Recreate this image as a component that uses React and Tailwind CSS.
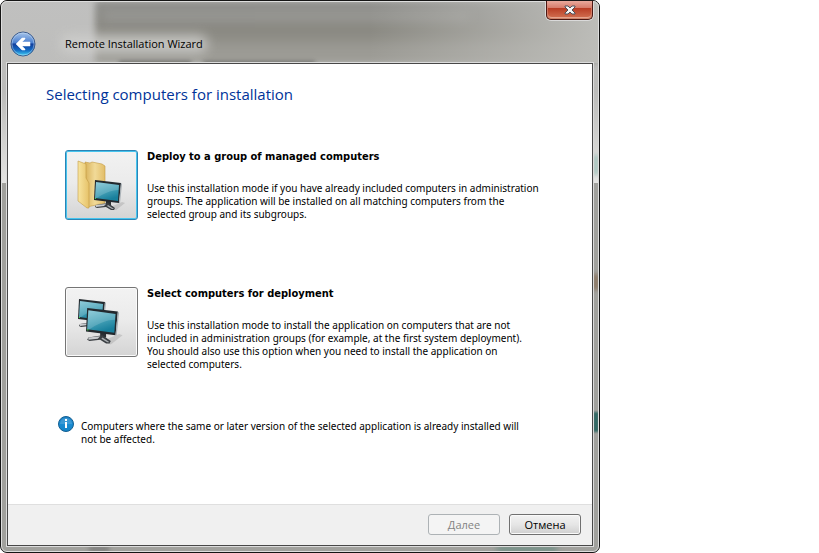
import React from "react";

function Monitor({ id }) {
  return (
    <g>
      <path d="M14 28 L28 22 L31 23 L21 31 Z" fill="#8a8a8a" opacity="0.3" />
      <path d="M12 20 L17 21 L17 25 L12 25 Z" fill="#2b2f33" />
      <path d="M2 25 L14 23 L21 28 L20 30 L17 30 L12 27 L3 28 L1 27 Z" fill="#3a3e42" />
      <path d="M2 25 L12 24 L10 26 L2 27 Z" fill="#c9cccf" />
      <path d="M14 25 L20 29 L18 29 L13 26 Z" fill="#a9adb0" />
      <path d="M1 0 L27 3 L25 23 L0 20 Z" fill="#23292e" />
      <path d="M27 3 L28 4 L26 23 L25 23 Z" fill="#a8b0b5" />
      <path d="M2 2 L25 5 L24 21 L1 18 Z" fill={`url(#${id})`} />
      <path d="M2 2 L25 5 L24.500 10 C17 10 9 14 3 18 L1 18 Z" fill="#ffffff" opacity="0.16" />
      <rect x="1" y="18" width="1" height="1" fill="#3fdc3f" />
    </g>
  );
}

function ScreenGradient({ id }) {
  return (
    <linearGradient id={id} x1="0" y1="0" x2="0.4" y2="1">
      <stop offset="0" stopColor="#7cc3d3" />
      <stop offset="0.5" stopColor="#4ba5ba" />
      <stop offset="1" stopColor="#187f9c" />
    </linearGradient>
  );
}

function FolderIcon() {
  return (
    <svg width="50" height="50" viewBox="0 0 50 50" aria-hidden="true">
      <defs>
        <ScreenGradient id="screenA" />
        <linearGradient id="folderFront" x1="0" y1="0" x2="1" y2="0">
          <stop offset="0" stopColor="#f8e5a0" />
          <stop offset="1" stopColor="#e6c269" />
        </linearGradient>
        <linearGradient id="folderBack" x1="0" y1="0" x2="1" y2="0">
          <stop offset="0" stopColor="#d9b25a" />
          <stop offset="0.5" stopColor="#f1da98" />
          <stop offset="1" stopColor="#e2bd68" />
        </linearGradient>
      </defs>
      <path d="M8 2 L13 3 L15 2 L25 4 L28 6 L28 43 L10 47 Z" fill="url(#folderBack)" stroke="#c39a45" strokeWidth="0.6" />
      <path d="M1 1 L9 4 L9 18 L12 23 L12 48 L10 48 L1 41 Z" fill="url(#folderFront)" stroke="#c39a45" strokeWidth="0.6" />
      <g transform="translate(17 20)"><Monitor id="screenA" /></g>
    </svg>
  );
}

function MonitorsIcon() {
  return (
    <svg width="50" height="50" viewBox="0 0 50 50" aria-hidden="true">
      <defs>
        <ScreenGradient id="screenB" />
        <ScreenGradient id="screenC" />
      </defs>
      <g transform="translate(1 2)"><Monitor id="screenB" /></g>
      <g transform="translate(9 11) scale(1.18)"><Monitor id="screenC" /></g>
    </svg>
  );
}

function BackIcon() {
  return (
    <svg width="26" height="26" viewBox="0 0 26 26" aria-hidden="true">
      <defs>
        <linearGradient id="orb" x1="0" y1="0" x2="0" y2="1">
          <stop offset="0" stopColor="#a9c6ea" />
          <stop offset="0.45" stopColor="#4a7fd0" />
          <stop offset="0.5" stopColor="#123f9c" />
          <stop offset="0.75" stopColor="#1268c2" />
          <stop offset="1" stopColor="#45d6f8" />
        </linearGradient>
      </defs>
      <circle cx="13" cy="13" r="12" fill="url(#orb)" stroke="#3d5c8c" />
      <circle cx="13" cy="13" r="11" fill="none" stroke="#d5e8fa" strokeOpacity="0.4" />
      <path d="M6 13 L12 7 L15 7 L15 8 L12 11 L20 11 L20 15 L12 15 L15 18 L15 19 L12 19 Z" fill="#fff" stroke="#fff" strokeWidth="0.5" strokeLinejoin="round" />
    </svg>
  );
}

function InfoIcon() {
  return (
    <svg className="shrink-0" width="17" height="17" viewBox="0 0 17 17" role="img" aria-label="Information">
      <defs>
        <linearGradient id="info" x1="0" y1="0" x2="0" y2="1">
          <stop offset="0" stopColor="#1c80c4" />
          <stop offset="0.5" stopColor="#1a8cd2" />
          <stop offset="1" stopColor="#1583c6" />
        </linearGradient>
      </defs>
      <circle cx="8" cy="8" r="7.500" fill="url(#info)" stroke="#145f92" />
      <path d="M2 8 A6 6 0 0 1 14 8 Z" fill="#fff" opacity="0.15" />
      <rect x="7" y="3" width="2" height="2" fill="#fff" />
      <rect x="7" y="6" width="2" height="6" fill="#fff" />
    </svg>
  );
}

function Option({ id, title, selected, icon, children }) {
  return (
    <section className="flex items-start gap-[9px]">
      <button
        type="button"
        aria-labelledby={id}
        className={
          "flex h-[70px] w-[73px] shrink-0 items-center justify-center rounded-[3px] border bg-linear-to-b from-[#f2f2f2] from-0% via-[#ebebeb] via-47% to-[#d4d4d4] to-100% " +
          (selected
            ? "border-[#2c84b5] shadow-[inset_0_0_0_1px_#45c4ee]"
            : "border-[#757575] shadow-[inset_0_0_0_1px_#fafafa]")
        }
      >
        {icon}
      </button>
      <div className="max-w-[394px]">
        <h2 id={id} className="font-['DejaVu_Sans_Condensed',sans-serif] text-[11px] leading-[13px] font-bold">{title}</h2>
        <p className="mt-[19px]">{children}</p>
      </div>
    </section>
  );
}

export default function App() {
  return (
    <div className="min-h-screen bg-white">
      <div className="relative isolate flex min-h-screen w-full max-w-[600px] flex-col overflow-hidden rounded-[7px] border border-[#151515] bg-[#a1a19d] font-['Noto_Sans',sans-serif] text-[10px] leading-[13px] text-black">
        <div aria-hidden="true" className="absolute inset-0 -z-10">
          <div className="h-[182px] bg-linear-to-b from-[#c0c0bf] via-[#bcbcba] via-50% to-[#e4e4e2]" />
          <div className="absolute top-0 right-0 left-[94px] h-[62px] bg-linear-to-b from-[#8f8f8d] from-0% via-[#8a8982] via-50% to-[#9c9b95] to-80% blur-[3px]" />
          <div className="absolute top-[10px] right-[130px] left-[102px] h-[10px] bg-[#a3a39f] opacity-50 blur-[5px]" />
          <div className="absolute top-0 right-0 h-[62px] w-[230px] bg-linear-to-r from-transparent to-[#bdbdb9]" />
          <div className="absolute top-[60px] left-[118px] flex gap-[12px] opacity-70 blur-[2px]">
            <div className="h-[6px] w-[72px] bg-[#4c4c49]" />
            <div className="h-[6px] w-[112px] bg-[#5c5c58]" />
          </div>
          <div className="absolute top-[154px] right-0 h-[20px] w-[6px] bg-[#a9c4be] blur-[2px]" />
          <div className="absolute top-[273px] right-0 h-[16px] w-[6px] bg-[#8c7762] blur-[2px]" />
          <div className="absolute top-[411px] right-0 h-[20px] w-[6px] bg-[#356a66] blur-[1px]" />
          <div className="absolute bottom-0 left-[88px] h-[6px] w-[20px] bg-[#80807e] blur-[2px]" />
          <div className="absolute right-[42px] bottom-0 h-[6px] w-[60px] bg-[#6b8d82] blur-[3px]" />
        </div>
        <div className="flex flex-1 flex-col rounded-[6px] border border-[#dedede] px-[4px] pb-[4px]">
          <header className="relative flex h-[60px] items-end gap-[24px] pr-[60px] pb-[5px] pl-[4px]">
            <button type="button" aria-label="Back" className="h-[26px] w-[26px] rounded-full"><BackIcon /></button>
            <div className="relative flex h-[26px] items-center px-[5px]">
              <span aria-hidden="true" className="absolute inset-x-0 inset-y-[4px] -z-10 rounded-full bg-[#d0d0ce] opacity-80 blur-[6px]" />
              <h1 className="font-['Open_Sans',sans-serif] text-[11px] leading-[16px]">Remote Installation Wizard</h1>
            </div>
            <button type="button" aria-label="Close" className="absolute -top-px right-px flex h-[19px] w-[47px] items-center justify-center rounded-b-[5px] border border-t-0 border-[#4b1712] bg-linear-to-b from-[#e9a99d] from-0% via-[#d17361] via-45% to-[#d08369] to-100% shadow-[0_0_0_1px_#dadada]">
              <span className="absolute inset-x-px bottom-px h-[10px] rounded-b-[4px] border-b border-[#e5a48d] bg-linear-to-b from-[#b83a22] to-[#cf6a4c]" />
              <svg className="relative" width="12" height="10" viewBox="0 0 12 10" aria-hidden="true">
                <path d="M1 1 H4 L6 3 L8 1 H11 V2 L8 5 L11 8 V9 H8 L6 7 L4 9 H1 V8 L4 5 L1 2 Z" fill="#f5f5f5" stroke="#4d535c" />
              </svg>
            </button>
          </header>
          <div className="flex flex-1 flex-col border border-[#dcdcdc]">
            <div className="flex flex-1 flex-col border border-[#484848] bg-white">
              <main className="flex flex-1 flex-col pt-[18px] pb-[58px] pl-[57px]">
                <h2 className="-ml-[19px] font-['Open_Sans',sans-serif] text-[15px] leading-[24px] text-[#003399]">Selecting computers for installation</h2>
                <div className="mt-[44px] flex flex-col gap-[66px]">
                  <Option id="group" title="Deploy to a group of managed computers" selected icon={<FolderIcon />}>
                    Use this installation mode if you have already included computers in administration groups. The application will be installed on all matching computers from the selected group and its subgroups.
                  </Option>
                  <Option id="select" title="Select computers for deployment" icon={<MonitorsIcon />}>
                    Use this installation mode to install the application on computers that are not included in administration groups (for example, at the first system deployment). You should also use this option when you need to install the application on selected&nbsp;computers.
                  </Option>
                </div>
                <div className="mt-[45px] -ml-[7px] flex gap-[6px]">
                  <InfoIcon />
                  <p className="max-w-[456px] pt-[4px]">Computers where the same or later version of the selected application is already installed will not be affected.</p>
                </div>
              </main>
              <footer className="flex justify-end gap-[9px] border-t border-[#dfdfdf] bg-[#f0f0f0] pt-[9px] pr-[11px] pb-[10px] font-['Open_Sans',sans-serif] text-[11px]">
                <button type="button" disabled className="h-[21px] w-[72px] rounded-[3px] border border-[#adb2b5] bg-[#f4f4f4] text-[#838383]"><u>Д</u>алее</button>
                <button type="button" className="h-[21px] w-[72px] rounded-[3px] border border-[#707070] bg-linear-to-b from-[#f2f2f2] from-0% via-[#e6e6e6] via-50% to-[#cfcfcf] to-100% shadow-[inset_0_0_0_1px_#fafafa]">Отмена</button>
              </footer>
            </div>
          </div>
        </div>
      </div>
    </div>
  );
}
